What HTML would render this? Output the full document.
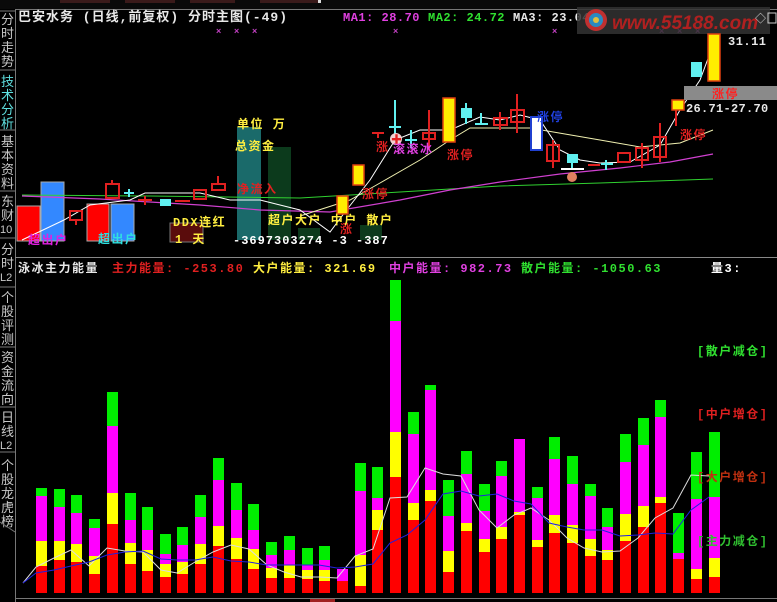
<!DOCTYPE html>
<html><head><meta charset="utf-8"><style>
html,body{margin:0;padding:0;background:#000;width:777px;height:602px;overflow:hidden}
svg{display:block}
text{font-family:"Liberation Sans","Noto Sans CJK SC","WenQuanYi Zen Hei",sans-serif;font-weight:bold}
.s{font-size:12px;font-family:"Liberation Mono","Noto Sans CJK SC",monospace;letter-spacing:1.5px}
.v{font-size:13px;fill:#c8c8c8;font-weight:normal}
</style></head><body>
<svg width="777" height="602" viewBox="0 0 777 602" xmlns="http://www.w3.org/2000/svg">
<rect width="777" height="602" fill="#000"/>
<rect x="0" y="0" width="777" height="9" fill="#0a0a0a"/>
<rect x="60" y="0" width="50" height="3" fill="#3a1a1a"/><rect x="125" y="0" width="50" height="3" fill="#3a1a1a"/><rect x="190" y="0" width="45" height="3" fill="#3a1a1a"/><rect x="260" y="0" width="60" height="3" fill="#3a1a1a"/><rect x="318" y="0" width="3" height="3" fill="#ddd"/>
<line x1="15" y1="9.5" x2="777" y2="9.5" stroke="#777"/>
<line x1="15.5" y1="9" x2="15.5" y2="602" stroke="#777"/>
<g class="v">
<text x="1" y="24" class="v">分</text><text x="1" y="38" class="v">时</text><text x="1" y="52" class="v">走</text><text x="1" y="66" class="v">势</text>
<text x="1" y="86" class="v" style="fill:#5fe0e0">技</text><text x="1" y="100" class="v" style="fill:#5fe0e0">术</text><text x="1" y="114" class="v" style="fill:#5fe0e0">分</text><text x="1" y="128" class="v" style="fill:#5fe0e0">析</text>
<text x="1" y="146" class="v">基</text><text x="1" y="160" class="v">本</text><text x="1" y="174" class="v">资</text><text x="1" y="188" class="v">料</text>
<text x="1" y="206" class="v">东</text><text x="1" y="220" class="v">财</text><text x="0" y="233" class="v" style="font-size:11px">10</text>
<text x="1" y="254" class="v">分</text><text x="1" y="268" class="v">时</text><text x="0" y="281" class="v" style="font-size:11px">L2</text>
<text x="1" y="302" class="v">个</text><text x="1" y="316" class="v">股</text><text x="1" y="330" class="v">评</text><text x="1" y="344" class="v">测</text>
<text x="1" y="362" class="v">资</text><text x="1" y="376" class="v">金</text><text x="1" y="390" class="v">流</text><text x="1" y="404" class="v">向</text>
<text x="1" y="422" class="v">日</text><text x="1" y="436" class="v">线</text><text x="0" y="449" class="v" style="font-size:11px">L2</text>
<text x="1" y="470" class="v">个</text><text x="1" y="484" class="v">股</text><text x="1" y="498" class="v">龙</text><text x="1" y="512" class="v">虎</text><text x="1" y="526" class="v">榜</text>
</g>
<g stroke="#777" fill="none">
<path d="M0 11 L15 11 M0 70 L15 70 M0 130 L15 130 M0 191 L15 191 M0 238 L15 238 M0 287 L15 287 M0 347 L15 347 M0 407 L15 407 M0 452 L15 452 M0 522 L15 532"/>
</g>
<text x="18" y="21" class="s" style="font-size:13px;letter-spacing:1px" fill="#e8e8e8">巴安水务 (日线,前复权) 分时主图(-49)</text>
<text x="343" y="21" class="s" style="letter-spacing:0.5px" fill="#e040e0">MA1: 28.70</text>
<text x="428" y="21" class="s" style="letter-spacing:0.5px" fill="#30e030">MA2: 24.72</text>
<text x="513" y="21" class="s" style="letter-spacing:0.5px" fill="#e8e8e8">MA3: 23.04</text>
<g fill="#c040c0" font-size="9"><text x="216" y="34">×</text><text x="234" y="34">×</text><text x="252" y="34">×</text><text x="393" y="34">×</text><text x="552" y="34">×</text><text x="659" y="34">×</text><text x="677" y="34">×</text><text x="695" y="34">×</text></g>
<rect x="577" y="7" width="193" height="27" fill="#333" opacity="0.85"/>
<circle cx="596" cy="20" r="11" fill="#c03030"/><circle cx="596" cy="20" r="7" fill="#2a8ac0"/><circle cx="596" cy="20" r="3" fill="#e0c040"/>
<text x="612" y="29" font-size="19" fill="#b02020" font-style="italic">www.55188.com</text>
<text x="755" y="22" font-size="11" fill="#ccc">◇</text><rect x="768" y="13" width="8" height="10" fill="none" stroke="#ccc"/>
<rect x="17" y="206" width="23" height="35" fill="#f00" stroke="#aaa"/>
<rect x="41" y="182" width="23" height="59" fill="#3388ff" stroke="#aaa"/>
<rect x="87" y="204" width="22" height="37" fill="#f00" stroke="#aaa"/>
<rect x="111" y="204" width="23" height="37" fill="#3388ff" stroke="#aaa"/>
<rect x="237" y="127" width="24" height="113" fill="#1a6a6a"/>
<rect x="268" y="147" width="23" height="93" fill="#0c3a1c"/>
<rect x="170" y="223" width="33" height="19" fill="#5a0c0c" stroke="#777"/>
<rect x="298" y="228" width="22" height="12" fill="#0c3a1c"/><rect x="360" y="225" width="22" height="15" fill="#0c3a1c"/>
<polyline fill="none" stroke="#30d030" stroke-width="1" points="22,195 150,196 300,198 400,192 500,186 600,183 713,179"/>
<polyline fill="none" stroke="#d040d0" stroke-width="1.2" points="22,196 100,199 200,205 260,210 330,212 400,200 450,190 500,182 560,174 620,168 670,162 713,154"/>
<polyline fill="none" stroke="#f0f0b0" stroke-width="1" points="300,216 350,200 380,183 420,160 450,140 470,128 530,128 600,140 640,147 680,143 713,130"/>
<polyline fill="none" stroke="#fff" stroke-width="1" points="22,240 64,220 90,205 130,200 145,193 200,193 230,200 260,200 300,210 330,232 345,212 370,180 395,140 420,130 450,130 480,117 500,120 520,115 540,120 560,150 580,160 600,163 630,162 660,145 680,110 700,80 715,40"/>
<g fill="none" stroke="#e02020" stroke-width="2">
<rect x="70" y="211" width="12" height="9"/><line x1="76" y1="220" x2="76" y2="225"/>
<rect x="106" y="184" width="13" height="14"/><line x1="112" y1="180" x2="112" y2="184"/>
<line x1="138" y1="200" x2="152" y2="200"/><line x1="145" y1="196" x2="145" y2="205"/>
<line x1="175" y1="201" x2="190" y2="201"/>
<rect x="194" y="190" width="12" height="9"/>
<rect x="212" y="184" width="13" height="6"/><line x1="218" y1="176" x2="218" y2="184"/>
<rect x="423" y="133" width="12" height="6"/><line x1="429" y1="110" x2="429" y2="150"/>
<rect x="494" y="118" width="13" height="7"/><line x1="500" y1="112" x2="500" y2="130"/>
<rect x="511" y="110" width="13" height="12"/><line x1="517" y1="94" x2="517" y2="133"/>
<rect x="547" y="145" width="12" height="16"/><line x1="553" y1="140" x2="553" y2="168"/>
<line x1="588" y1="165" x2="600" y2="165"/>
<rect x="618" y="153" width="12" height="9"/>
<rect x="636" y="148" width="12" height="12"/><line x1="642" y1="143" x2="642" y2="168"/>
<rect x="654" y="137" width="12" height="20"/><line x1="660" y1="123" x2="660" y2="162"/>
<line x1="676" y1="110" x2="676" y2="126"/>
<line x1="372" y1="133" x2="384" y2="133"/><line x1="378" y1="133" x2="378" y2="138"/>
</g>
<g stroke="#60f0f0" stroke-width="2" fill="#60f0f0">
<line x1="124" y1="193" x2="134" y2="193"/><line x1="129" y1="189" x2="129" y2="197"/>
<rect x="160" y="199" width="11" height="7" stroke="none"/>
<line x1="395" y1="100" x2="395" y2="135"/><line x1="389" y1="127" x2="401" y2="127"/>
<line x1="411" y1="130" x2="411" y2="148"/><line x1="405" y1="140" x2="417" y2="140"/>
<rect x="461" y="108" width="11" height="10" stroke="none"/><line x1="466" y1="103" x2="466" y2="124"/>
<line x1="481" y1="113" x2="481" y2="125"/><line x1="475" y1="124" x2="488" y2="124"/>
<rect x="567" y="154" width="11" height="9" stroke="none"/><line x1="572" y1="163" x2="572" y2="168"/>
<line x1="606" y1="160" x2="606" y2="170"/><line x1="601" y1="164" x2="613" y2="164"/>
<rect x="691" y="62" width="11" height="15" stroke="none"/>
</g>
<line x1="561" y1="169" x2="584" y2="169" stroke="#fff" stroke-width="2"/>
<rect x="531" y="117" width="11" height="33" fill="#fff" stroke="#2040d0" stroke-width="2"/>
<g fill="#ffee00" stroke="#e04010" stroke-width="1.5">
<rect x="337" y="196" width="11" height="18"/>
<rect x="353" y="165" width="11" height="20"/>
<rect x="443" y="98" width="12" height="44"/>
<rect x="672" y="100" width="12" height="10"/>
<rect x="708" y="34" width="12" height="47"/>
</g>
<circle cx="396" cy="139" r="6" fill="#f0d0d0"/><text x="391" y="143" font-size="11" fill="#e02020">✚</text>
<circle cx="572" cy="177" r="5" fill="#e08060"/>
<rect x="684" y="86" width="93" height="14" fill="#8a8a8a"/>
<text x="712" y="98" class="s" fill="#ff2020">涨停</text>
<text x="686" y="112" class="s" style="letter-spacing:0.3px" fill="#e8e8e8">26.71-27.70</text>
<text x="728" y="45" class="s" style="letter-spacing:0.5px" fill="#e8e8e8">31.11</text>
<text x="680" y="139" class="s" fill="#e02020">涨停</text>
<text x="447" y="159" class="s" fill="#e02020">涨停</text>
<text x="362" y="198" class="s" fill="#e02020">涨停</text>
<text x="537" y="121" class="s" fill="#2040e0">涨停</text>
<text x="376" y="151" class="s" fill="#e02020">涨</text>
<text x="393" y="153" class="s" fill="#e040e0">滚滚冰</text>
<text x="340" y="233" class="s" fill="#e02020">涨</text>
<text x="28" y="244" class="s" fill="#e020e0">超出户</text>
<text x="98" y="243" class="s" fill="#30e0e0">超出户</text>
<text x="237" y="128" class="s" fill="#ffee40">单位 万</text>
<text x="235" y="150" class="s" fill="#ffee40">总资金</text>
<text x="237" y="193" class="s" fill="#e02020">净流入</text>
<text x="173" y="226" class="s" fill="#ffee40">DDX连红</text>
<text x="175" y="243" class="s" fill="#ffee40">1 天</text>
<text x="268" y="224" class="s" fill="#ffee40">超户大户 中户 散户</text>
<text x="233" y="244" class="s" style="letter-spacing:1px" fill="#fff">-3697303274 -3  -387</text>
<line x1="15" y1="257.5" x2="777" y2="257.5" stroke="#888"/>
<text x="18" y="272" class="s" fill="#e8e8e8">泳冰主力能量</text>
<text x="112" y="272" class="s" fill="#e02020">主力能量: -253.80</text>
<text x="253" y="272" class="s" fill="#ffee40">大户能量: 321.69</text>
<text x="389" y="272" class="s" fill="#e040e0">中户能量: 982.73</text>
<text x="521" y="272" class="s" fill="#30e030">散户能量: -1050.63</text>
<text x="711" y="272" class="s" fill="#fff">量3:</text>
<g>
<g fill="#00ee00">
<rect x="36" y="488" width="11" height="105"/><rect x="54" y="489" width="11" height="104"/><rect x="71" y="495" width="11" height="98"/><rect x="89" y="519" width="11" height="74"/><rect x="107" y="392" width="11" height="201"/><rect x="125" y="493" width="11" height="100"/><rect x="142" y="507" width="11" height="86"/><rect x="160" y="534" width="11" height="59"/><rect x="177" y="527" width="11" height="66"/><rect x="195" y="495" width="11" height="98"/><rect x="213" y="458" width="11" height="135"/><rect x="231" y="483" width="11" height="110"/><rect x="248" y="504" width="11" height="89"/><rect x="266" y="542" width="11" height="51"/><rect x="284" y="536" width="11" height="57"/><rect x="302" y="548" width="11" height="45"/><rect x="319" y="546" width="11" height="47"/><rect x="355" y="463" width="11" height="130"/><rect x="372" y="467" width="11" height="126"/><rect x="390" y="280" width="11" height="313"/><rect x="408" y="412" width="11" height="181"/><rect x="425" y="385" width="11" height="208"/><rect x="443" y="480" width="11" height="113"/><rect x="461" y="451" width="11" height="142"/><rect x="479" y="484" width="11" height="109"/><rect x="496" y="461" width="11" height="132"/><rect x="532" y="487" width="11" height="106"/><rect x="549" y="437" width="11" height="156"/><rect x="567" y="456" width="11" height="137"/><rect x="585" y="484" width="11" height="109"/><rect x="602" y="508" width="11" height="85"/><rect x="620" y="434" width="11" height="159"/><rect x="638" y="418" width="11" height="175"/><rect x="655" y="400" width="11" height="193"/><rect x="673" y="513" width="11" height="80"/><rect x="691" y="452" width="11" height="141"/><rect x="709" y="432" width="11" height="161"/>
</g>
<g fill="#ff00ff">
<rect x="36" y="496" width="11" height="97"/><rect x="54" y="507" width="11" height="86"/><rect x="71" y="513" width="11" height="80"/><rect x="89" y="528" width="11" height="65"/><rect x="107" y="426" width="11" height="167"/><rect x="125" y="520" width="11" height="73"/><rect x="142" y="530" width="11" height="63"/><rect x="160" y="554" width="11" height="39"/><rect x="177" y="545" width="11" height="48"/><rect x="195" y="517" width="11" height="76"/><rect x="213" y="480" width="11" height="113"/><rect x="231" y="510" width="11" height="83"/><rect x="248" y="530" width="11" height="63"/><rect x="266" y="555" width="11" height="38"/><rect x="284" y="550" width="11" height="43"/><rect x="302" y="565" width="11" height="28"/><rect x="319" y="560" width="11" height="33"/><rect x="337" y="569" width="11" height="24"/><rect x="355" y="491" width="11" height="102"/><rect x="372" y="498" width="11" height="95"/><rect x="390" y="321" width="11" height="272"/><rect x="408" y="434" width="11" height="159"/><rect x="425" y="390" width="11" height="203"/><rect x="443" y="516" width="11" height="77"/><rect x="461" y="474" width="11" height="119"/><rect x="479" y="511" width="11" height="82"/><rect x="496" y="476" width="11" height="117"/><rect x="514" y="439" width="11" height="154"/><rect x="532" y="498" width="11" height="95"/><rect x="549" y="459" width="11" height="134"/><rect x="567" y="484" width="11" height="109"/><rect x="585" y="496" width="11" height="97"/><rect x="602" y="527" width="11" height="66"/><rect x="620" y="462" width="11" height="131"/><rect x="638" y="445" width="11" height="148"/><rect x="655" y="417" width="11" height="176"/><rect x="673" y="553" width="11" height="40"/><rect x="691" y="499" width="11" height="94"/><rect x="709" y="497" width="11" height="96"/>
</g>
<g fill="#ffff00">
<rect x="36" y="541" width="11" height="52"/><rect x="54" y="541" width="11" height="52"/><rect x="71" y="544" width="11" height="49"/><rect x="89" y="556" width="11" height="37"/><rect x="107" y="493" width="11" height="100"/><rect x="125" y="543" width="11" height="50"/><rect x="142" y="550" width="11" height="43"/><rect x="160" y="564" width="11" height="29"/><rect x="177" y="562" width="11" height="31"/><rect x="195" y="544" width="11" height="49"/><rect x="213" y="526" width="11" height="67"/><rect x="231" y="538" width="11" height="55"/><rect x="248" y="549" width="11" height="44"/><rect x="266" y="568" width="11" height="25"/><rect x="284" y="565" width="11" height="28"/><rect x="302" y="570" width="11" height="23"/><rect x="319" y="570" width="11" height="23"/><rect x="355" y="555" width="11" height="38"/><rect x="372" y="510" width="11" height="83"/><rect x="390" y="432" width="11" height="161"/><rect x="408" y="503" width="11" height="90"/><rect x="425" y="490" width="11" height="103"/><rect x="443" y="551" width="11" height="42"/><rect x="461" y="523" width="11" height="70"/><rect x="479" y="539" width="11" height="54"/><rect x="496" y="527" width="11" height="66"/><rect x="514" y="512" width="11" height="81"/><rect x="532" y="540" width="11" height="53"/><rect x="549" y="515" width="11" height="78"/><rect x="567" y="525" width="11" height="68"/><rect x="585" y="539" width="11" height="54"/><rect x="602" y="550" width="11" height="43"/><rect x="620" y="514" width="11" height="79"/><rect x="638" y="506" width="11" height="87"/><rect x="655" y="497" width="11" height="96"/><rect x="691" y="569" width="11" height="24"/><rect x="709" y="558" width="11" height="35"/>
</g>
<g fill="#ff0000">
<rect x="36" y="566" width="11" height="27"/><rect x="54" y="560" width="11" height="33"/><rect x="71" y="562" width="11" height="31"/><rect x="89" y="574" width="11" height="19"/><rect x="107" y="524" width="11" height="69"/><rect x="125" y="564" width="11" height="29"/><rect x="142" y="571" width="11" height="22"/><rect x="160" y="577" width="11" height="16"/><rect x="177" y="574" width="11" height="19"/><rect x="195" y="564" width="11" height="29"/><rect x="213" y="546" width="11" height="47"/><rect x="231" y="559" width="11" height="34"/><rect x="248" y="569" width="11" height="24"/><rect x="266" y="578" width="11" height="15"/><rect x="284" y="578" width="11" height="15"/><rect x="302" y="579" width="11" height="14"/><rect x="319" y="581" width="11" height="12"/><rect x="337" y="581" width="11" height="12"/><rect x="355" y="586" width="11" height="7"/><rect x="372" y="530" width="11" height="63"/><rect x="390" y="477" width="11" height="116"/><rect x="408" y="520" width="11" height="73"/><rect x="425" y="501" width="11" height="92"/><rect x="443" y="572" width="11" height="21"/><rect x="461" y="531" width="11" height="62"/><rect x="479" y="552" width="11" height="41"/><rect x="496" y="539" width="11" height="54"/><rect x="514" y="515" width="11" height="78"/><rect x="532" y="547" width="11" height="46"/><rect x="549" y="533" width="11" height="60"/><rect x="567" y="543" width="11" height="50"/><rect x="585" y="556" width="11" height="37"/><rect x="602" y="560" width="11" height="33"/><rect x="620" y="541" width="11" height="52"/><rect x="638" y="527" width="11" height="66"/><rect x="655" y="503" width="11" height="90"/><rect x="673" y="559" width="11" height="34"/><rect x="691" y="579" width="11" height="14"/><rect x="709" y="577" width="11" height="16"/>
</g>
</g>
<polyline fill="none" stroke="#ddd" stroke-width="1" points="23,583 36,567 54,558 71,550 89,566 107,548 125,551 143,552 161,570 177,573 195,562 213,552 231,545 249,549 267,565 284,572 301,577 319,577 337,578 355,556 373,549 390,498 407,497 425,468 443,474 461,476 479,510 497,528 514,515 531,508 549,520 567,538 584,548 602,552 620,551 638,538 655,518 673,508 691,475 709,476"/>
<polyline fill="none" stroke="#2020e0" stroke-width="1" points="23,583 36,573 54,570 71,566 89,562 107,555 125,552 143,551 161,559 177,560 195,560 213,557 231,561 249,562 267,565 284,565 301,565 319,565 337,568 355,567 373,564 390,543 407,535 425,520 443,494 461,491 479,496 497,494 514,501 531,504 549,523 567,527 584,530 602,530 620,536 638,535 655,533 673,534 691,510 709,497"/>
<text x="697" y="355" class="s" fill="#30e030">[散户减仓]</text>
<text x="697" y="418" class="s" fill="#e02020">[中户增仓]</text>
<text x="697" y="481" class="s" fill="#c03010">[大户增仓]</text>
<text x="697" y="545" class="s" fill="#30c030">[主力减仓]</text>
<line x1="15" y1="598.5" x2="777" y2="598.5" stroke="#777"/>
<rect x="310" y="599" width="25" height="3" fill="#a02020"/>
</svg>
</body></html>
